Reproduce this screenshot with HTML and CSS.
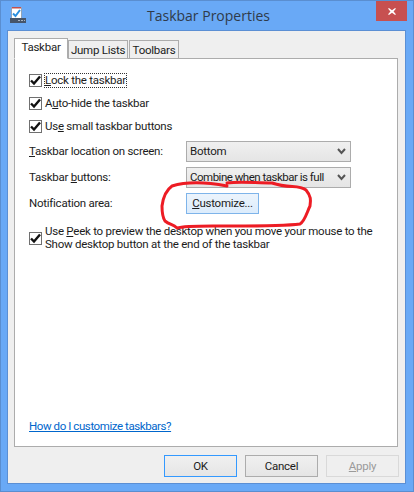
FILE: index.html
```html
<!DOCTYPE html>
<html lang="en">
  <head>
    <meta charset="UTF-8" />
    <title>Taskbar Properties</title>
    <link rel="stylesheet" href="styles.css">
  </head>
  <body>
    <div class="window">
      <div class="title-bar">
        <svg class="app-icon" width="16" height="16" viewBox="0 0 16 16">
          <path d="M1.5 .5h10v11h-10z" fill="#fff" stroke="#8fa3b8" />
          <path d="M2 0h9v1.500h-9z" fill="#c0504d" />
          <path d="M3 6.500l2.500 2.500l4.500-6" fill="none" stroke="#2a8fe0" stroke-width="2" />
          <path d="M0 11h16v5h-16z" fill="#46556a" />
          <path d="M8 13h2v1h-2zM11 13h2v1h-2zM14 13h1v1h-1z" fill="#a9b4c2" />
        </svg>
        <div class="title">Taskbar Properties</div>
        <div class="close-button">
          <svg width="8" height="7" viewBox="0 0 10 9">
            <path d="M1 0l4 3l4-3l1 1l-3 3.500l3 3.500l-1 1l-4-3l-4 3l-1-1l3-3.500l-3-3.500z" fill="#fff" />
          </svg>
        </div>
      </div>

      <div class="client">
        <div class="tabs">
          <div class="tab active">Taskbar</div>
          <div class="tab jump">Jump Lists</div>
          <div class="tab toolbars">Toolbars</div>
        </div>

        <div class="panel">
          <div class="check-row first">
            <span class="checkbox"><svg width="11" height="11" viewBox="0 0 11 11"><path d="M1 5.500l3 3l6-7" fill="none" stroke="#111" stroke-width="2.400" /></svg></span>
            <span class="check-label focused"><u>L</u>ock the taskbar</span>
          </div>
          <div class="check-row">
            <span class="checkbox"><svg width="11" height="11" viewBox="0 0 11 11"><path d="M1 5.500l3 3l6-7" fill="none" stroke="#111" stroke-width="2.400" /></svg></span>
            <span class="check-label">A<u>u</u>to-hide the taskbar</span>
          </div>
          <div class="check-row">
            <span class="checkbox"><svg width="11" height="11" viewBox="0 0 11 11"><path d="M1 5.500l3 3l6-7" fill="none" stroke="#111" stroke-width="2.400" /></svg></span>
            <span class="check-label">Us<u>e</u> small taskbar buttons</span>
          </div>

          <div class="form-grid">
            <span><u>T</u>askbar location on screen:</span>
            <div class="select">
              <span>Bottom</span>
              <svg width="9" height="7" viewBox="0 0 9 7"><path d="M1 1l3.500 4l3.500-4" fill="none" stroke="#555" stroke-width="2" /></svg>
            </div>
            <span>Taskbar <u>b</u>uttons:</span>
            <div class="select">
              <span class="select-long">Combine when taskbar is full</span>
              <svg width="9" height="7" viewBox="0 0 9 7"><path d="M1 1l3.500 4l3.500-4" fill="none" stroke="#555" stroke-width="2" /></svg>
            </div>
            <span>Notification area:</span>
            <div class="customize"><u>C</u>ustomize...</div>
          </div>

          <div class="check-row peek">
            <span class="checkbox"><svg width="11" height="11" viewBox="0 0 11 11"><path d="M1 5.500l3 3l6-7" fill="none" stroke="#111" stroke-width="2.400" /></svg></span>
            <span class="check-label">Use <u>P</u>eek to preview the desktop when you move your mouse to the<br />Show desktop button at the end of the taskbar</span>
          </div>

          <a class="help-link" href="#">How do I customize taskbars?</a>
        </div>

        <div class="button-row">
          <div class="button default">OK</div>
          <div class="button">Cancel</div>
          <div class="button disabled"><u>A</u>pply</div>
        </div>
      </div>
    </div>

    <!-- red marker scribble on top of the dialog -->
    <svg class="scribble" width="414" height="492" viewBox="0 0 414 492">
      <path d="M227 186C200 181 182 183 172 186C165 191 163 198 162 206C162 214 163 218 165 221C170 225 173 224 177 228C186 225 215 226 233 226C260 226 285 226 300 224C305 221 307 212 310 206C311 200 311 196 306 190C298 184 290 189 272 183C255 183 240 181 227 183" fill="none" stroke="#ed1c24" stroke-width="3" stroke-linecap="round" stroke-linejoin="round" />
    </svg>
  </body>
</html>
```

FILE: styles.css
```css
* {
  margin: 0;
  padding: 0;
  box-sizing: border-box;
}

body {
  position: relative;
  width: 414px;
  height: 492px;
  overflow: hidden;
  font-family: Roboto, Arial, sans-serif;
  font-size: 11.5px;
  letter-spacing: -0.25px;
  line-height: 13px;
  color: #1c1c1c;
}

.window {
  width: 414px;
  height: 492px;
  background: #69a9f6;
  border: 1px solid #5a8ed0;
  display: flex;
  flex-direction: column;
}

/* Title bar */
.title-bar {
  height: 29px;
  flex: none;
  display: grid;
  grid-template-columns: 1fr auto 1fr;
  align-items: start;
  padding-left: 9px;
  padding-right: 6px;
}

.app-icon {
  margin-top: 6px;
}

.title {
  margin-top: 6px;
  font-family: "Open Sans", Arial, sans-serif;
  font-size: 14px;
  letter-spacing: 0;
  line-height: 18px;
  color: #2f3b4a;
}

.close-button {
  justify-self: end;
  width: 31px;
  height: 20px;
  background: #c75050;
  display: flex;
  align-items: center;
  justify-content: center;
}

/* Dialog body */
.client {
  flex: 1;
  margin: 0 7px 7px 6px;
  background: #efefef;
  border: 1px solid #5b8fd4;
  padding: 7px 7px 0 6px;
  display: flex;
  flex-direction: column;
}

.tabs {
  height: 21px;
  flex: none;
  display: flex;
  align-items: flex-start;
  position: relative;
  z-index: 1;
  margin-bottom: -1px;
}

.tab {
  height: 19px;
  margin-top: 2px;
  margin-right: 1px;
  background: #efefef;
  border: 1px solid #acacac;
  line-height: 18px;
  text-align: center;
  white-space: nowrap;
}

.tab.active {
  height: 21px;
  margin-top: 0;
  width: 54px;
  background: #fff;
  border-bottom-color: #fff;
  line-height: 16px;
  margin-right: 0;
}

.tab.jump {
  width: 60px;
}

.tab.toolbars {
  width: 50px;
}

.panel {
  height: 389px;
  width: 384px;
  flex: none;
  background: #fff;
  border: 1px solid #acacac;
  padding: 15px 14px 0;
  display: flex;
  flex-direction: column;
}

.check-row {
  display: flex;
  align-items: center;
  gap: 3px;
  margin-bottom: 10px;
  height: 13px;
}

.checkbox {
  width: 13px;
  height: 13px;
  flex: none;
  background: #fff;
  border: 1px solid #707070;
  display: flex;
  align-items: center;
  justify-content: center;
}

.check-label {
  white-space: nowrap;
}

.check-label.focused {
  outline: 1px dotted #333;
}

.form-grid {
  display: grid;
  grid-template-columns: 157px 165px;
  grid-auto-rows: 21px;
  row-gap: 5px;
  align-items: center;
  margin-top: -2px;
}

.select {
  height: 21px;
  border: 1px solid #acacac;
  background: linear-gradient(#f0f0f0, #e5e5e5);
  padding: 0 4px 0 3px;
  display: flex;
  align-items: center;
  justify-content: space-between;
  white-space: nowrap;
}

.select-long {
  letter-spacing: -0.5px;
}

.customize {
  width: 73px;
  height: 21px;
  border: 1px solid #7eb4ea;
  background: linear-gradient(#ecf4fc, #dcecfc);
  text-align: center;
  line-height: 19px;
}

.check-row.peek {
  margin-top: 11px;
  height: 26px;
  margin-bottom: 0;
}

.help-link {
  margin-top: auto;
  margin-bottom: 13px;
  color: #0066cc;
  align-self: flex-start;
  letter-spacing: -0.42px;
}

.button-row {
  display: flex;
  justify-content: flex-end;
  gap: 8px;
  margin-top: 8px;
  margin-right: -1px;
}

.button {
  width: 73px;
  height: 22px;
  border: 1px solid #acacac;
  background: linear-gradient(#f0f0f0, #e5e5e5);
  text-align: center;
  line-height: 20px;
}

.button.default {
  border-color: #3399ff;
}

.button.disabled {
  background: #efefef;
  border-color: #d9d9d9;
  color: #9a9a9a;
}

/* marker overlay */
.scribble {
  position: absolute;
  top: 0;
  left: 0;
}
```
